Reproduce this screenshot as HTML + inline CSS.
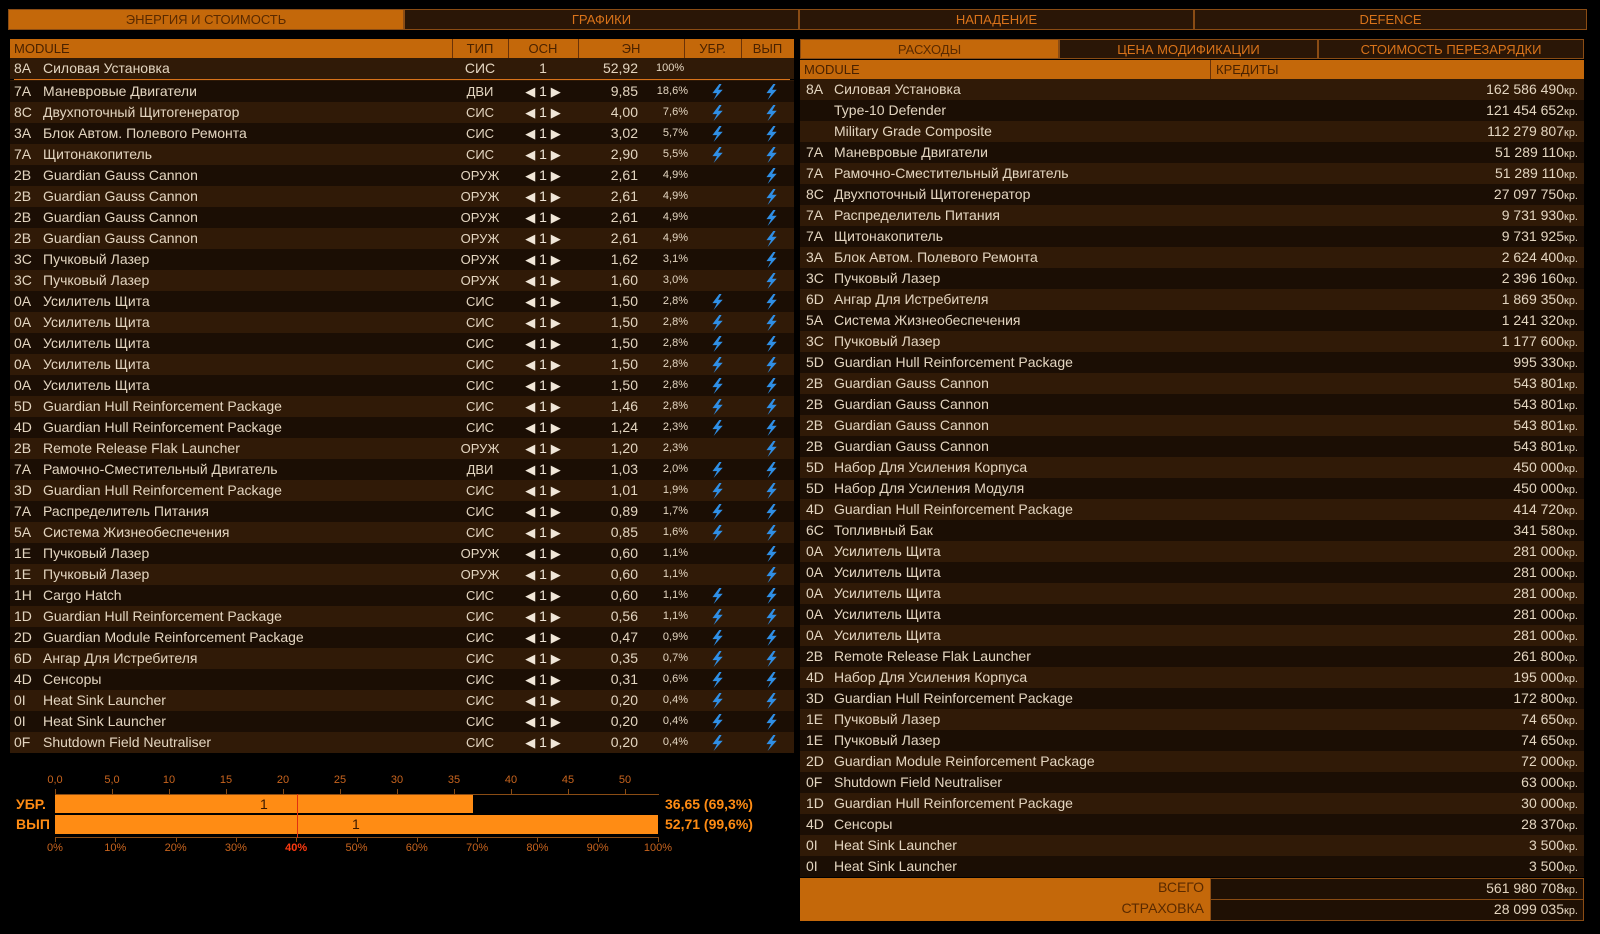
<!DOCTYPE html>
<html><head><meta charset="utf-8"><style>
*{margin:0;padding:0;box-sizing:border-box}
body{width:1600px;height:934px;background:#000;font-family:"Liberation Sans",sans-serif;color:#e3d5c0;position:relative;overflow:hidden;font-size:14px}
.a{position:absolute}
.tab{position:absolute;top:9px;height:21px;border:1px solid #8a4c14;background:#2a1606;color:#d9731a;font-size:13px;text-align:center;line-height:19px}
.tab.on{background:#c4680a;color:#5a2a00}
.hd{position:absolute;background:#c4680a;color:#4a2200;font-size:13px;line-height:19px;height:19px}
.row{position:absolute;height:21px;line-height:21px;white-space:nowrap}
.r1{background:#301a07}.r0{background:#1b0e04}
.c{position:absolute;top:0}
.t{text-align:center}
.pc{font-size:11px}
.kr{font-size:11px}
.bolt{position:absolute;top:3px;width:14px;height:16px}
.ax{position:absolute;font-size:11px;color:#c8641e}
</style></head><body>
<svg width="0" height="0" style="position:absolute"><defs><symbol id="b" viewBox="0 0 12 14"><path d="M8 0 L2 8 L6 8 L3 14 L11 5 L7 5 L10 0 Z" fill="#2f8fe6"/></symbol></defs></svg>

<div class="tab on" style="left:8px;width:396px">ЭНЕРГИЯ И СТОИМОСТЬ</div>
<div class="tab" style="left:404px;width:395px">ГРАФИКИ</div>
<div class="tab" style="left:799px;width:395px">НАПАДЕНИЕ</div>
<div class="tab" style="left:1194px;width:393px">DEFENCE</div>

<div class="hd" style="left:10px;top:39px;width:784px;height:19px"></div>
<div class="hd a" style="left:14px;top:39px;background:none">MODULE</div>
<div class="a" style="left:452px;top:39px;width:1px;height:19px;background:#6a3208"></div>
<div class="a" style="left:508px;top:39px;width:1px;height:19px;background:#6a3208"></div>
<div class="a" style="left:578px;top:39px;width:1px;height:19px;background:#6a3208"></div>
<div class="a" style="left:684px;top:39px;width:1px;height:19px;background:#6a3208"></div>
<div class="a" style="left:741px;top:39px;width:1px;height:19px;background:#6a3208"></div>
<div class="hd a t" style="left:452px;top:39px;width:56px;background:none">ТИП</div>
<div class="hd a t" style="left:508px;top:39px;width:70px;background:none">ОСН</div>
<div class="hd a t" style="left:578px;top:39px;width:106px;background:none">ЭН</div>
<div class="hd a t" style="left:684px;top:39px;width:57px;background:none">УБР.</div>
<div class="hd a t" style="left:741px;top:39px;width:53px;background:none">ВЫП</div>

<div class="row r1" style="left:10px;top:58px;width:784px"><span class="c" style="left:4px">8A</span><span class="c" style="left:33px">Силовая Установка</span><span class="c t" style="left:442px;width:56px">СИС</span><span class="c t" style="left:498px;width:70px">1</span><span class="c" style="left:568px;width:60px;text-align:right">52,92</span><span class="c pc" style="left:646px">100%</span></div>
<div class="a" style="left:14px;top:79px;width:776px;height:1px;background:#d9731a"></div>
<div class="a" style="left:10px;top:80px;width:784px;height:1px;background:#2e1907"></div>

<div id="L"></div>

<div class="a" style="left:55px;top:794px;width:604px;height:1px;background:#8a4c14"></div>
<div class="a" style="left:55px;top:837px;width:604px;height:1px;background:#8a4c14"></div>
<div class="a" style="left:55px;top:795px;width:418px;height:18px;background:#ff8c14"></div>
<div class="a" style="left:55px;top:815px;width:603px;height:19px;background:#ff8c14"></div>
<div class="a" style="left:297px;top:794px;width:1px;height:44px;background:#e03010"></div>
<div class="a" style="left:260px;top:796px;font-size:14px;color:#3a1800">1</div>
<div class="a" style="left:352px;top:816px;font-size:14px;color:#3a1800">1</div>
<div class="a" style="left:16px;top:796px;font-size:14px;font-weight:bold;color:#ff8c14">УБР.</div>
<div class="a" style="left:16px;top:816px;font-size:14px;font-weight:bold;color:#ff8c14">ВЫП</div>
<div class="a" style="left:665px;top:796px;font-size:14px;font-weight:bold;color:#ff8c14">36,65 (69,3%)</div>
<div class="a" style="left:665px;top:816px;font-size:14px;font-weight:bold;color:#ff8c14">52,71 (99,6%)</div>
<div id="AX"></div>

<div class="tab on" style="left:800px;top:39px;width:259px;height:20px">РАСХОДЫ</div>
<div class="tab" style="left:1059px;top:39px;width:259px;height:20px">ЦЕНА МОДИФИКАЦИИ</div>
<div class="tab" style="left:1318px;top:39px;width:266px;height:20px">СТОИМОСТЬ ПЕРЕЗАРЯДКИ</div>
<div class="hd" style="left:800px;top:60px;width:784px"></div>
<div class="hd a" style="left:804px;top:60px;background:none">MODULE</div>
<div class="a" style="left:1210px;top:60px;width:1px;height:19px;background:#6a3208"></div>
<div class="hd a" style="left:1216px;top:60px;background:none">КРЕДИТЫ</div>
<div id="R"></div>

<div class="a" style="left:800px;top:878px;width:410px;height:43px;background:#c4680a"></div>
<div class="a" style="left:1100px;top:879px;width:104px;text-align:right;color:#5a2a00;font-size:14px">ВСЕГО</div>
<div class="a" style="left:1050px;top:900px;width:154px;text-align:right;color:#5a2a00;font-size:14px">СТРАХОВКА</div>
<div class="a" style="left:1210px;top:878px;width:374px;height:22px;background:#1f1004;border:1px solid #8a4c14"></div>
<div class="a" style="left:1210px;top:899px;width:374px;height:22px;background:#1f1004;border:1px solid #8a4c14"></div>
<div class="a" style="left:1300px;top:880px;width:278px;text-align:right">561 980 708<span class="kr">кр.</span></div>
<div class="a" style="left:1300px;top:901px;width:278px;text-align:right">28 099 035<span class="kr">кр.</span></div>

<script>
var L=[["7A","Маневровые Двигатели","ДВИ","9,85","18,6%",1],["8C","Двухпоточный Щитогенератор","СИС","4,00","7,6%",1],["3A","Блок Автом. Полевого Ремонта","СИС","3,02","5,7%",1],["7A","Щитонакопитель","СИС","2,90","5,5%",1],["2B","Guardian Gauss Cannon","ОРУЖ","2,61","4,9%",0],["2B","Guardian Gauss Cannon","ОРУЖ","2,61","4,9%",0],["2B","Guardian Gauss Cannon","ОРУЖ","2,61","4,9%",0],["2B","Guardian Gauss Cannon","ОРУЖ","2,61","4,9%",0],["3C","Пучковый Лазер","ОРУЖ","1,62","3,1%",0],["3C","Пучковый Лазер","ОРУЖ","1,60","3,0%",0],["0A","Усилитель Щита","СИС","1,50","2,8%",1],["0A","Усилитель Щита","СИС","1,50","2,8%",1],["0A","Усилитель Щита","СИС","1,50","2,8%",1],["0A","Усилитель Щита","СИС","1,50","2,8%",1],["0A","Усилитель Щита","СИС","1,50","2,8%",1],["5D","Guardian Hull Reinforcement Package","СИС","1,46","2,8%",1],["4D","Guardian Hull Reinforcement Package","СИС","1,24","2,3%",1],["2B","Remote Release Flak Launcher","ОРУЖ","1,20","2,3%",0],["7A","Рамочно-Сместительный Двигатель","ДВИ","1,03","2,0%",1],["3D","Guardian Hull Reinforcement Package","СИС","1,01","1,9%",1],["7A","Распределитель Питания","СИС","0,89","1,7%",1],["5A","Система Жизнеобеспечения","СИС","0,85","1,6%",1],["1E","Пучковый Лазер","ОРУЖ","0,60","1,1%",0],["1E","Пучковый Лазер","ОРУЖ","0,60","1,1%",0],["1H","Cargo Hatch","СИС","0,60","1,1%",1],["1D","Guardian Hull Reinforcement Package","СИС","0,56","1,1%",1],["2D","Guardian Module Reinforcement Package","СИС","0,47","0,9%",1],["6D","Ангар Для Истребителя","СИС","0,35","0,7%",1],["4D","Сенсоры","СИС","0,31","0,6%",1],["0I","Heat Sink Launcher","СИС","0,20","0,4%",1],["0I","Heat Sink Launcher","СИС","0,20","0,4%",1],["0F","Shutdown Field Neutraliser","СИС","0,20","0,4%",1]];
var h="",bolt='<svg class="bolt" style="left:XXpx"><use href="#b"/></svg>';
L.forEach(function(r,i){h+='<div class="row r'+(i%2?1:0)+'" style="left:10px;top:'+(81+21*i)+'px;width:784px"><span class="c" style="left:4px">'+r[0]+'</span><span class="c" style="left:33px">'+r[1]+'</span><span class="c t" style="left:442px;width:56px;font-size:13px">'+r[2]+'</span><span class="c t" style="left:498px;width:70px;color:#f0e6d8"><span style="font-size:13px">◀</span> 1 <span style="font-size:13px">▶</span></span><span class="c" style="left:568px;width:60px;text-align:right">'+r[3]+'</span><span class="c pc" style="left:628px;width:50px;text-align:right">'+r[4]+'</span>'+(r[5]?bolt.replace("XX",700):"")+bolt.replace("XX",754)+'</div>';});
document.getElementById("L").outerHTML=h;
var R=[["8A","Силовая Установка","162 586 490"],["","Type-10 Defender","121 454 652"],["","Military Grade Composite","112 279 807"],["7A","Маневровые Двигатели","51 289 110"],["7A","Рамочно-Сместительный Двигатель","51 289 110"],["8C","Двухпоточный Щитогенератор","27 097 750"],["7A","Распределитель Питания","9 731 930"],["7A","Щитонакопитель","9 731 925"],["3A","Блок Автом. Полевого Ремонта","2 624 400"],["3C","Пучковый Лазер","2 396 160"],["6D","Ангар Для Истребителя","1 869 350"],["5A","Система Жизнеобеспечения","1 241 320"],["3C","Пучковый Лазер","1 177 600"],["5D","Guardian Hull Reinforcement Package","995 330"],["2B","Guardian Gauss Cannon","543 801"],["2B","Guardian Gauss Cannon","543 801"],["2B","Guardian Gauss Cannon","543 801"],["2B","Guardian Gauss Cannon","543 801"],["5D","Набор Для Усиления Корпуса","450 000"],["5D","Набор Для Усиления Модуля","450 000"],["4D","Guardian Hull Reinforcement Package","414 720"],["6C","Топливный Бак","341 580"],["0A","Усилитель Щита","281 000"],["0A","Усилитель Щита","281 000"],["0A","Усилитель Щита","281 000"],["0A","Усилитель Щита","281 000"],["0A","Усилитель Щита","281 000"],["2B","Remote Release Flak Launcher","261 800"],["4D","Набор Для Усиления Корпуса","195 000"],["3D","Guardian Hull Reinforcement Package","172 800"],["1E","Пучковый Лазер","74 650"],["1E","Пучковый Лазер","74 650"],["2D","Guardian Module Reinforcement Package","72 000"],["0F","Shutdown Field Neutraliser","63 000"],["1D","Guardian Hull Reinforcement Package","30 000"],["4D","Сенсоры","28 370"],["0I","Heat Sink Launcher","3 500"],["0I","Heat Sink Launcher","3 500"]];
h="";
R.forEach(function(r,i){h+='<div class="row r'+(i%2?0:1)+'" style="left:800px;top:'+(79+21*i)+'px;width:784px"><span class="c" style="left:6px">'+r[0]+'</span><span class="c" style="left:34px">'+r[1]+'</span><span class="c" style="left:500px;width:278px;text-align:right">'+r[2]+'<span class="kr">кр.</span></span></div>';});
document.getElementById("R").outerHTML=h;
h="";
var tl=["0,0","5,0","10","15","20","25","30","35","40","45","50"];
tl.forEach(function(t,i){var x=55+57*i;h+='<div class="ax" style="left:'+(x-20)+'px;top:774px;width:40px;text-align:center">'+t+'</div><div class="a" style="left:'+x+'px;top:789px;width:1px;height:5px;background:#8a4c14"></div>';});
for(var i=0;i<=10;i++){var x=55+60.3*i;h+='<div class="ax" style="left:'+(x-20)+'px;top:842px;width:40px;text-align:center;'+(i==4?'color:#ff3a10;font-weight:bold':'')+'">'+(i*10)+'%</div><div class="a" style="left:'+Math.round(x)+'px;top:837px;width:1px;height:5px;background:#8a4c14"></div>';}
document.getElementById("AX").outerHTML=h;
</script>
</body></html>
